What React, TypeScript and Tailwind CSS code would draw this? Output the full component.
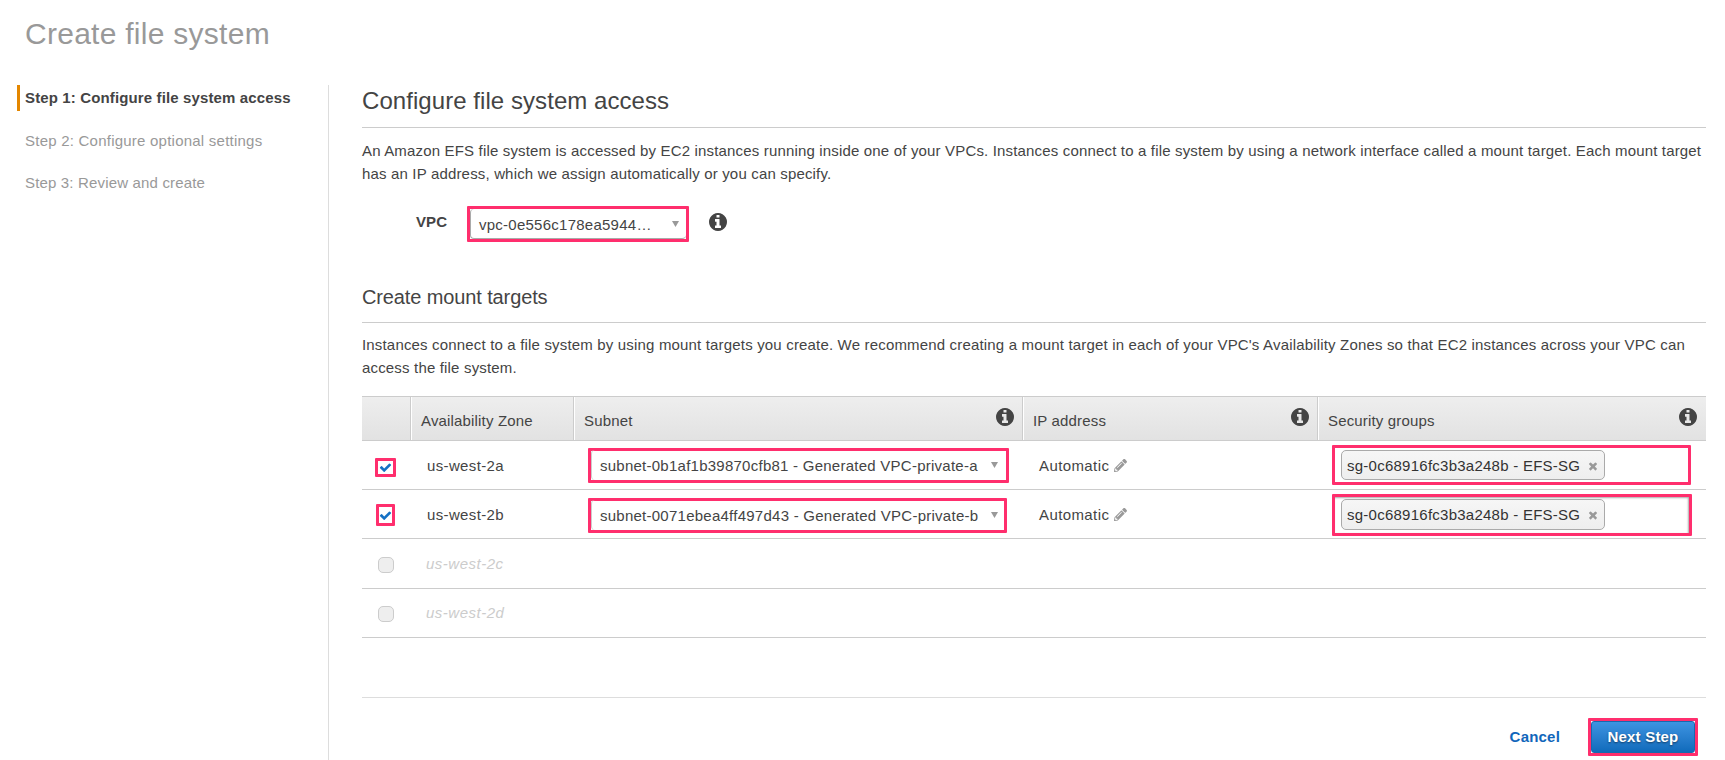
import type { ReactNode } from "react";
import { FaPencilAlt } from "react-icons/fa";

type Zone = {
  name: string;
  subnet?: string;
  group?: string;
  check: string;
  label: string;
  subnetFrame?: string;
  groupFrame?: string;
  chip?: string;
};

const columns = "grid grid-cols-[49px_163px_449px_295px_388px]";

const zones: Zone[] = [
  {
    name: "us-west-2a",
    subnet: "subnet-0b1af1b39870cfb81 - Generated VPC-private-a",
    group: "sg-0c68916fc3b3a248b - EFS-SG",
    check: "ml-[13px] mt-[17px] h-[19px] w-[21px]",
    label: "pl-4 pt-[15px] tracking-[0.36px]",
    subnetFrame: "ml-[14px] mt-[7px] h-[35px] w-[421px]",
    groupFrame: "ml-[14px] mt-1 h-10 w-[359px]",
    chip: "mt-[2px] h-[30px] pt-px",
  },
  {
    name: "us-west-2b",
    subnet: "subnet-0071ebea4ff497d43 - Generated VPC-private-b",
    group: "sg-0c68916fc3b3a248b - EFS-SG",
    check: "ml-[14px] mt-[14px] h-[22px] w-[19px]",
    label: "pl-4 pt-[15px] tracking-[0.36px]",
    subnetFrame: "ml-[14px] mt-[8px] h-[35px] w-[419px]",
    groupFrame: "ml-[14px] mt-[4px] h-[42px] w-[360px] shadow-[inset_-1px_1px_2px_#aaa]",
    chip: "mt-[2px] h-[31px]",
  },
  {
    name: "us-west-2c",
    check: "mt-[18px]",
    label: "pl-[15px] pt-[15px] tracking-[0.5px] italic text-[#ccc]",
  },
  {
    name: "us-west-2d",
    check: "mt-[17px]",
    label: "pl-[15px] pt-[14px] tracking-[0.5px] italic text-[#ccc]",
  },
];

function Info({ className = "" }: { className?: string }) {
  return (
    <svg viewBox="0 128 1536 1536" className={`size-[18px] shrink-0 fill-[#444] ${className}`}>
      <path d="M1024 1376v-160q0-14-9-23t-23-9h-96v-512q0-14-9-23t-23-9h-320q-14 0-23 9t-9 23v160q0 14 9 23t23 9h96v320h-96q-14 0-23 9t-9 23v160q0 14 9 23t23 9h448q14 0 23-9t9-23zm-128-896v-160q0-14-9-23t-23-9h-192q-14 0-23 9t-9 23v160q0 14 9 23t23 9h192q14 0 23-9t9-23zm640 416q0 209-103 385.5t-279.5 279.5-385.5 103-385.5-103-279.5-279.5-103-385.5 103-385.5 279.5-279.5 385.5-103 385.5 103 279.5 279.5 103 385.5z" />
    </svg>
  );
}

function Check() {
  return (
    <svg viewBox="0 0 1792 1792" className="size-[13px] shrink-0 fill-[#1571c4]">
      <path d="M1671 566q0 40-28 68l-724 724-136 136q-28 28-68 28t-68-28l-136-136-362-362q-28-28-28-68t28-68l136-136q28-28 68-28t68 28l294 295 656-657q28-28 68-28t68 28l136 136q28 28 28 68z" />
    </svg>
  );
}

function Remove() {
  return (
    <svg viewBox="0 0 1792 1792" className="size-3 shrink-0 fill-[#999]">
      <path d="M1490 1322q0 40-28 68l-136 136q-28 28-68 28t-68-28l-294-294-294 294q-28 28-68 28t-68-28l-136-136q-28-28-28-68t28-68l294-294-294-294q-28-28-28-68t28-68l136-136q28-28 68-28t68 28l294 294 294-294q28-28 68-28t68 28l136 136q28 28 28 68t-28 68l-294 294 294 294q28 28 28 68z" />
    </svg>
  );
}

function Caret({ className = "" }: { className?: string }) {
  return (
    <svg viewBox="0 0 7 6" className={`h-1.5 w-[7px] shrink-0 fill-[#999] ${className}`}>
      <path d="M0 0h7L3.5 6z" />
    </svg>
  );
}

function HeaderCell({ label, info }: { label?: string; info?: boolean }) {
  return (
    <div className="flex justify-between border-r border-[#ccc] pl-[10px] pr-[8px] shadow-[1px_0_0_#fff] last:border-r-0 last:pr-[9px] last:shadow-none">
      <span className="pt-[14px] leading-5">{label}</span>
      {info && <Info className="mt-[11px]" />}
    </div>
  );
}

function ZoneRow({ zone, className }: { zone: Zone; className: string }) {
  const enabled = Boolean(zone.subnet);
  return (
    <div className={`${columns} ${className} border-b border-[#ccc]`}>
      <div>
        {enabled ? (
          <div
            className={`flex items-center justify-center rounded-[1px] border-[3px] border-[#ff2e6d] bg-white ${zone.check}`}
          >
            <Check />
          </div>
        ) : (
          <div className={`ml-4 size-4 rounded-[5px] border border-[#ccc] bg-[#eee] ${zone.check}`} />
        )}
      </div>
      <div className={`leading-5 ${zone.label}`}>{zone.name}</div>
      <div>
        {zone.subnet && (
          <div className={`flex rounded-[1px] border-[3px] border-[#ff2e6d] ${zone.subnetFrame}`}>
            <div className="-mt-px flex flex-1 items-start rounded border-l border-[#ccc] pl-[8px]">
              <span className="w-[391px] pt-[6px] leading-5 tracking-[0.25px]">{zone.subnet}</span>
              <Caret className="mt-[12px]" />
            </div>
          </div>
        )}
      </div>
      <div className="flex items-start pl-4 pt-[15px] leading-5">
        {enabled && (
          <>
            <span className="w-[75px] tracking-[0.4px]">Automatic</span>
            <FaPencilAlt className="mt-[3px] size-[13px] text-[#999]" />
          </>
        )}
      </div>
      <div>
        {zone.group && (
          <div className={`flex items-start rounded-[1px] border-[3px] border-[#ff2e6d] pl-[6px] ${zone.groupFrame}`}>
            <div
              className={`flex w-[264px] items-center rounded-[5px] border border-[#aaa] bg-linear-to-b from-[#f6f6f6] to-[#eee] pl-[5px] ${zone.chip}`}
            >
              <span className="w-[240px] leading-5 tracking-[0.25px] text-[#333]">{zone.group}</span>
              <Remove />
            </div>
          </div>
        )}
      </div>
    </div>
  );
}

function Step({ children }: { children: ReactNode }) {
  return <li className="pl-[25px] leading-[26px] text-[#999]">{children}</li>;
}

export default function App() {
  return (
    <div className="h-[760px] w-[1725px] overflow-hidden bg-white font-['Liberation_Sans',Arial,sans-serif] text-[15px] tracking-[0.166px] text-[#444]">
      <h1 className="h-[85px] pl-[25px] pt-4 text-[30px] leading-9 tracking-[0.27px] text-[#999]">
        Create file system
      </h1>
      <div className="flex h-[675px]">
        <ul className="flex w-[329px] flex-col gap-4 border-r border-[#ddd]">
          <li className="mb-px ml-[17px] border-l-[3px] border-[#e48700] pl-[5px] font-bold leading-[26px] tracking-[0.13px]">
            Step 1: Configure file system access
          </li>
          <Step>
            <span className="tracking-[0.23px]">Step 2: Configure optional settings</span>
          </Step>
          <Step>Step 3: Review and create</Step>
        </ul>

        <main className="w-[1377px] pl-[33px]">
          <h2 className="h-[43px] border-b border-[#ccc] text-[24px] leading-8 tracking-[0.06px]">
            Configure file system access
          </h2>
          <p className="whitespace-nowrap pt-[11px] leading-[23px]">
            An Amazon EFS file system is accessed by EC2 instances running inside one of your VPCs. Instances connect to a file system by using a network interface called a mount target. Each mount target
            <br />
            has an IP address, which we assign automatically or you can specify.
          </p>

          <div className="mt-[21px] flex h-9 items-start pl-[54px]">
            <span className="w-[51px] pt-[6px] font-bold leading-5 tracking-[0.1px]">VPC</span>
            <div className="flex h-9 w-[222px] rounded-[1px] border-[3px] border-[#ff2e6d]">
              <div className="flex flex-1 items-start rounded border-b border-l border-[#aaa] pl-[8px]">
                <span className="w-[193px] pt-[6px] leading-5 tracking-[0.25px]">vpc-0e556c178ea5944…</span>
                <Caret className="mt-[12px]" />
              </div>
            </div>
            <Info className="ml-5 mt-[7px]" />
          </div>

          <h3 className="mt-[41px] h-10 border-b border-[#ccc] text-[20px] leading-7 tracking-[-0.12px]">
            Create mount targets
          </h3>
          <p className="whitespace-nowrap pt-[10px] leading-[23px] tracking-[0.172px]">
            Instances connect to a file system by using mount targets you create. We recommend creating a mount target in each of your VPC's Availability Zones so that EC2 instances across your VPC can
            <br />
            access the file system.
          </p>

          <div className={`${columns} mt-[17px] h-[45px] border-y border-[#ccc] bg-linear-to-b from-[#eee] to-[#e2e2e2]`}>
            <HeaderCell />
            <HeaderCell label="Availability Zone" />
            <HeaderCell label="Subnet" info />
            <HeaderCell label="IP address" info />
            <HeaderCell label="Security groups" info />
          </div>
          <ZoneRow zone={zones[0]} className="h-[49px]" />
          <ZoneRow zone={zones[1]} className="h-[49px]" />
          <ZoneRow zone={zones[2]} className="h-[50px]" />
          <ZoneRow zone={zones[3]} className="h-[49px]" />

          <div className="mt-[59px] flex items-start justify-end border-t border-[#ddd] pr-[8px] pt-5">
            <a className="mr-[28px] pt-[9px] font-bold leading-5 tracking-[0.2px] text-[#1166bb]">Cancel</a>
            <div className="h-[38px] w-[110px] rounded-[1px] border-[3px] border-[#ff2e6d]">
              <button className="h-8 w-[104px] rounded-[3px] border border-[#1769b0] bg-linear-to-b from-[#3d94e2] to-[#0f6bbb] font-bold tracking-[0.2px] text-white text-shadow-[0_1px_2px_rgba(0,0,0,0.5)]">
                Next Step
              </button>
            </div>
          </div>
        </main>
      </div>
    </div>
  );
}
